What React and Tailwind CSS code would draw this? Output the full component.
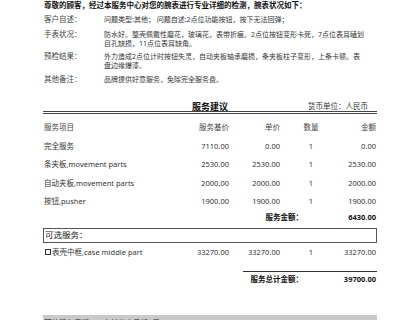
import React from 'react';

const font = { fontFamily: '"Noto Sans", "Noto Sans CJK SC", sans-serif' };

const info = [
  { label: '客户自述：', lines: ['问题类型:其他；  问题自述:2点位功能按钮，按下无法回弹；'], mt: 'mt-[5px]' },
  {
    label: '手表状况：',
    lines: ['防水好。整壳佩戴性磨花，玻璃花，表带折痕。2点位按钮变形卡死，7点位表耳磕划', '目孔缺损，11点位表耳缺角。'],
    mt: 'mt-[6px]',
  },
  {
    label: '预检结果：',
    lines: ['外力造成2点位计时按钮失灵，自动夹板轴承磨损，条夹板柱子变形，上条卡顿。表', '盘边缘爆漆。'],
    mt: 'mt-[4px]',
  },
  { label: '其他备注：', lines: ['品牌提供好意服务，免除完全服务费。'], mt: 'mt-[5px]' },
];

const rows = [
  { name: '完全服务', base: '7110.00', price: '0.00', qty: '1', amount: '0.00' },
  { name: '条夹板,movement parts', base: '2530.00', price: '2530.00', qty: '1', amount: '2530.00' },
  { name: '自动夹板,movement parts', base: '2000.00', price: '2000.00', qty: '1', amount: '2000.00' },
  { name: '按钮,pusher', base: '1900.00', price: '1900.00', qty: '1', amount: '1900.00' },
];

function Row({ name, base, price, qty, amount, className = '' }) {
  return (
    <div className={`grid grid-cols-[131px_55px_51px_62px_1fr] items-center whitespace-nowrap ${className}`}>
      <div className="pl-[1px]">{name}</div>
      <div className="text-right">{base}</div>
      <div className="text-right">{price}</div>
      <div className="text-center">{qty}</div>
      <div className="text-right pr-[1px]">{amount}</div>
    </div>
  );
}

export default function App() {
  return (
    <div className="w-[420px] h-[320px] overflow-hidden bg-white text-[#333] text-[7.5px]" style={font}>
      <div className="ml-[43px] w-[334px]">
        <div className="h-[10px] leading-[10px] pl-[1px] font-bold text-[#111] whitespace-nowrap">
          尊敬的顾客，经过本服务中心对您的腕表进行专业详细的检测，腕表状况如下：
        </div>

        {info.map((item) => (
          <div key={item.label} className={`flex leading-[9px] pl-[1px] ${item.mt}`}>
            <div className="w-[60px] shrink-0 text-[#444]">{item.label}</div>
            <div className="whitespace-nowrap text-[7px]">
              {item.lines.map((l) => (
                <div key={l}>{l}</div>
              ))}
            </div>
          </div>
        ))}

        <div className="mt-[16px] h-[11px] grid grid-cols-[1fr_auto_1fr] items-center">
          <div></div>
          <div className="text-[9px] font-bold text-[#111]">服务建议</div>
          <div className="justify-self-end mr-[9px] whitespace-nowrap">货币单位：人民币</div>
        </div>
        <div className="h-[3px] border-y border-[#444]"></div>

        <Row
          name="服务项目"
          base="服务基价"
          price="单价"
          qty="数量"
          amount="金额"
          className="mt-[5px] h-[18px] text-[#444]"
        />
        {rows.map((r) => (
          <Row key={r.name} {...r} className="h-[18.6px]" />
        ))}

        <div className="flex justify-end items-center h-[13px] font-bold text-[#111]">
          <div>服务金额：</div>
          <div className="w-[74px] text-right pr-[1px]">6430.00</div>
        </div>

        <div className="mt-[3.5px] h-[15px] border border-[#555] flex items-center pl-[1px] text-[8.5px] text-[#222]">
          可选服务：
        </div>

        <div className="grid grid-cols-[131px_55px_51px_62px_1fr] items-center h-[19px] whitespace-nowrap">
          <div className="flex items-center pl-[2px]">
            <span className="w-[6px] h-[6px] border border-[#333] mr-[1px]"></span>
            <span>表壳中框,case middle part</span>
          </div>
          <div className="text-right">33270.00</div>
          <div className="text-right">33270.00</div>
          <div className="text-center">1</div>
          <div className="text-right pr-[1px]">33270.00</div>
        </div>

        <div className="mt-[9px] ml-[200px] border-t border-[#333]"></div>
        <div className="flex justify-end items-center h-[16px] font-bold text-[#111]">
          <div>服务总计金额：</div>
          <div className="w-[74px] text-right pr-[1px]">39700.00</div>
        </div>

        <div className="mt-[27px] h-[14px] bg-[#c9c9c9] flex items-center pt-[4px] text-[#222] whitespace-nowrap">
          <div className="w-[60px] pl-[1px]">预计服务周期：</div>
          <div>自付款之日起1周</div>
        </div>
      </div>
    </div>
  );
}
